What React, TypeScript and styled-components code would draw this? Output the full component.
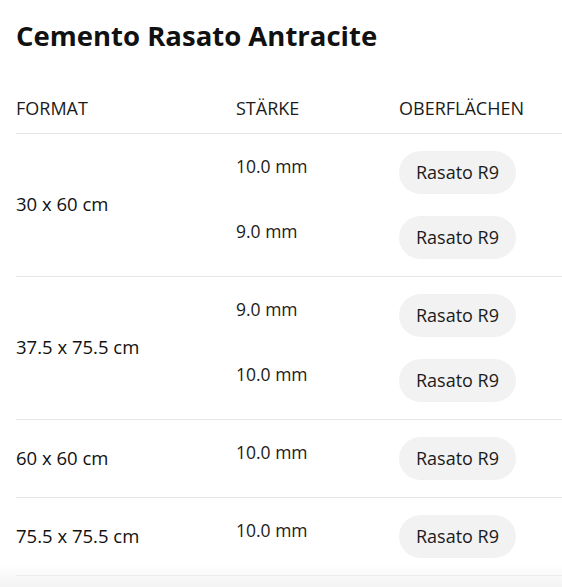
import styled, { createGlobalStyle } from "styled-components";

const GlobalStyle = createGlobalStyle`
  body {
    margin: 0;
    background: #fff;
    font-family: "Open Sans", "Noto Sans", sans-serif;
    color: #1b1b1b;
  }
`;

const Page = styled.div`
  padding: 0 0 0 16px;
  min-height: 587px;
  position: relative;
  overflow: hidden;
`;

const Title = styled.h1`
  margin: 0;
  padding-top: 18px;
  font-size: 27.5px;
  line-height: 36px;
  font-weight: 700;
  color: #111;
`;

const Table = styled.div`
  margin-top: 42px;
`;

const Row = styled.div<{ $head?: boolean }>`
  display: grid;
  grid-template-columns: 220px 163px 1fr;
  border-bottom: 1px solid #e6e6e6;
  padding: ${(p) => (p.$head ? "0 0 13px" : "6px 0")};
`;

const HeadCell = styled.div`
  font-size: 18px;
  line-height: 24px;
  text-transform: uppercase;
  color: #1b1b1b;
`;

const FormatCell = styled.div`
  display: flex;
  align-items: center;
  padding-bottom: 3px;
  font-size: 18.5px;
  color: #111;
`;

const Variants = styled.div`
  grid-column: 2 / 4;
  display: flex;
  flex-direction: column;
`;

const Variant = styled.div`
  display: grid;
  grid-template-columns: 163px 1fr;
  padding: 11px 0;
`;

const Strength = styled.div`
  font-size: 17.5px;
  line-height: 24px;
  padding-top: 3px;
`;

const Pill = styled.span`
  justify-self: start;
  display: inline-flex;
  align-items: center;
  height: 43px;
  padding: 0 17px 1px;
  box-sizing: border-box;
  border-radius: 22px;
  background: #f2f2f2;
  font-size: 18px;
  color: #1b1b1b;
`;

const BottomFade = styled.div`
  position: absolute;
  left: 0;
  right: 0;
  bottom: 0;
  height: 24px;
  background: linear-gradient(to bottom, rgba(243, 243, 243, 0), #f3f3f3);
  pointer-events: none;
`;

const formats = [
  { size: "30 x 60 cm", items: ["10.0 mm", "9.0 mm"] },
  { size: "37.5 x 75.5 cm", items: ["9.0 mm", "10.0 mm"] },
  { size: "60 x 60 cm", items: ["10.0 mm"] },
  { size: "75.5 x 75.5 cm", items: ["10.0 mm"] },
];

export default function App() {
  return (
    <>
      <GlobalStyle />
      <Page>
        <Title>Cemento Rasato Antracite</Title>
        <Table>
          <Row $head>
            <HeadCell>Format</HeadCell>
            <HeadCell>Stärke</HeadCell>
            <HeadCell>Oberflächen</HeadCell>
          </Row>
          {formats.map((f) => (
            <Row key={f.size}>
              <FormatCell>{f.size}</FormatCell>
              <Variants>
                {f.items.map((s, i) => (
                  <Variant key={i}>
                    <Strength>{s}</Strength>
                    <div>
                      <Pill>Rasato R9</Pill>
                    </div>
                  </Variant>
                ))}
              </Variants>
            </Row>
          ))}
        </Table>
        <BottomFade />
      </Page>
    </>
  );
}
